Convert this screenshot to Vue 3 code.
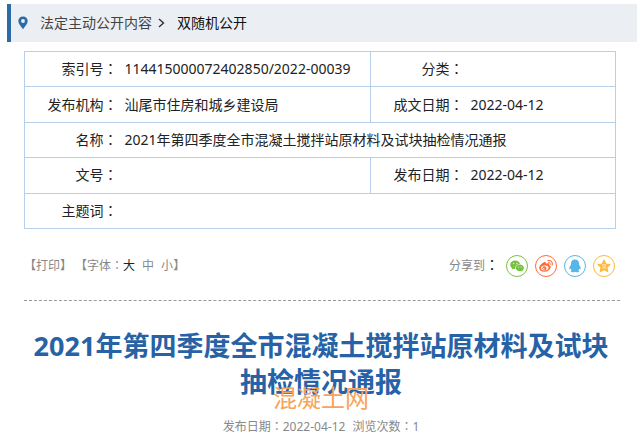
<template>
    <div class="page">
        <nav class="crumbs">
            <svg class="pin" viewBox="0 0 10 14" aria-hidden="true">
                <path fill="#2b6ca8" fill-rule="evenodd" d="M5 0.5C2.3 0.5 0.3 2.5 0.3 5C0.3 8 3.3 10.8 5 13.3C6.7 10.8 9.7 8 9.7 5C9.7 2.5 7.7 0.5 5 0.5ZM5 3.1A1.9 1.9 0 1 1 5 6.9A1.9 1.9 0 1 1 5 3.1Z" />
            </svg>
            <a class="crumb" href="#">法定主动公开内容</a>
            <svg class="arrow" viewBox="0 0 7 10" aria-hidden="true">
                <path d="M1 1L5.5 5L1 9" fill="none" stroke="#333" stroke-width="1.4" />
            </svg>
            <a class="crumb current" href="#">双随机公开</a>
        </nav>

        <table class="info">
            <colgroup>
                <col class="label-col">
                <col>
                <col class="label-col">
                <col class="date-col">
            </colgroup>
            <tbody>
                <tr v-for="(row, index) in rows" :key="index">
                    <template v-for="item in row" :key="item.label">
                        <th scope="row">{{ item.label }}<span class="colon">：</span></th>
                        <td :colspan="row.length === 1 ? 3 : 1">{{ item.value }}</td>
                    </template>
                </tr>
            </tbody>
        </table>

        <div class="tools">
            <div class="tool-group">
                <span>【<button @click="printPage">打印</button>】</span>
                <span class="sizes">【字体<span class="colon">：</span><button v-for="size in sizes" :key="size" :class="{ active: size === selectedSize }" @click="selectedSize = size">{{ size }}</button>】</span>
            </div>
            <div class="share">
                <span>分享到<b class="colon">：</b></span>
                <button class="share-button wechat" aria-label="微信">
                    <svg viewBox="0 0 14 14">
                        <path fill="#7ac143" d="M5.2 1.6C2.3 1.6 0.2 3.4 0.2 5.8C0.2 7.2 0.9 8.4 2.1 9.2L1.6 10.8L3.5 9.8C4.1 10 4.7 10.1 5.4 10C4.7 7.2 7 4.9 10 4.9C9.5 3 7.6 1.6 5.2 1.6Z" />
                        <path fill="#7ac143" d="M9.8 5.5C7.4 5.5 5.8 7 5.8 8.9C5.8 10.8 7.5 12.2 9.8 12.2C10.3 12.2 10.8 12.1 11.3 12L12.8 12.8L12.4 11.4C13.3 10.8 13.9 9.9 13.9 8.9C13.9 7 12.1 5.5 9.8 5.5Z" />
                        <g fill="#fff">
                            <circle cx="3.6" cy="4.6" r="0.6" />
                            <circle cx="6.9" cy="4.6" r="0.6" />
                            <circle cx="8.4" cy="7.9" r="0.5" />
                            <circle cx="11.2" cy="7.9" r="0.5" />
                        </g>
                    </svg>
                </button>
                <button class="share-button weibo" aria-label="微博">
                    <svg viewBox="0 0 14 14">
                        <path fill="#ff6c38" d="M5.7 3C6.8 2.7 7.3 3.5 6.9 4.8C8.8 4 10.5 4.2 10 6.1C11.3 6.5 12 7.4 11.6 8.8C11 11.1 8.4 12.8 5.5 12.8C2.6 12.8 0.2 11.2 0.2 9C0.2 6.8 3.1 3.7 5.7 3Z" />
                        <ellipse cx="5.7" cy="9" rx="3.8" ry="2.5" fill="#fff" transform="rotate(-8 5.7 9)" />
                        <circle cx="5.4" cy="9.2" r="2" fill="#ff6c38" />
                        <circle cx="4.8" cy="9.7" r="0.7" fill="#fff" />
                        <g fill="none" stroke="#ff6c38" stroke-linecap="round">
                            <path stroke-width="1.1" d="M9 1.6C11.7 1 13.9 3.1 13.1 6" />
                            <path stroke-width="0.9" d="M9.4 3.5C10.7 3.2 11.7 4.2 11.3 5.5" />
                        </g>
                    </svg>
                </button>
                <button class="share-button qq" aria-label="QQ">
                    <svg viewBox="0 0 14 14">
                        <path fill="#56b6e7" d="M7 0.6C4.3 0.6 2.9 2.4 3 4.7C3.1 5.5 2.8 5.8 2.6 6.3C1.7 7.7 1.1 9.2 1.4 10.3C1.6 10.8 2.2 10.3 2.7 9.6C2.9 10.4 3.2 10.9 3.7 11.4C2.8 11.8 2.6 12.3 3 12.8C3.6 13.5 6.2 13.4 7 12.7C7.8 13.4 10.4 13.5 11 12.8C11.4 12.3 11.2 11.8 10.3 11.4C10.8 10.9 11.1 10.4 11.3 9.6C11.8 10.3 12.4 10.8 12.6 10.3C12.9 9.2 12.3 7.7 11.4 6.3C11.2 5.8 10.9 5.5 11 4.7C11.1 2.4 9.7 0.6 7 0.6Z" />
                    </svg>
                </button>
                <button class="share-button qzone" aria-label="QQ空间">
                    <svg viewBox="0 0 14 14">
                        <path fill="#fdb93d" stroke="#fdb93d" stroke-width="1.2" stroke-linejoin="round" d="M7 1.2L8.8 5L13 5.5L9.9 8.4L10.7 12.6L7 10.5L3.3 12.6L4.1 8.4L1 5.5L5.2 5Z" />
                        <path fill="none" stroke="#fff" stroke-width="0.7" d="M4.7 5.9H9L5.5 8.9H9.4" />
                    </svg>
                </button>
            </div>
        </div>

        <article>
            <div class="heading">
                <h1>2021年第四季度全市混凝土搅拌站原材料及试块抽检情况通报</h1>
                <span class="watermark">混凝土网</span>
            </div>
            <p class="meta">
                <span>发布日期<span class="colon">：</span>2022-04-12</span>
                <span>浏览次数<span class="colon">：</span>1</span>
            </p>
        </article>
    </div>
</template>

<script setup>
import { ref } from 'vue';

const rows = [
    [
        { label: '索引号', value: '114415000072402850/2022-00039' },
        { label: '分类', value: '' },
    ],
    [
        { label: '发布机构', value: '汕尾市住房和城乡建设局' },
        { label: '成文日期', value: '2022-04-12' },
    ],
    [
        { label: '名称', value: '2021年第四季度全市混凝土搅拌站原材料及试块抽检情况通报' },
    ],
    [
        { label: '文号', value: '' },
        { label: '发布日期', value: '2022-04-12' },
    ],
    [
        { label: '主题词', value: '' },
    ],
];

const sizes = ['大', '中', '小'];
const selectedSize = ref('大');

function printPage() {
    window.print();
}
</script>

<style>
body {
    margin: 0;
    background-color: #fff;
}
</style>

<style scoped>
.page {
    padding: 4px 3px 0 7px;
    font-family: "Noto Sans", "Noto Sans CJK SC", sans-serif;
    font-size: 14px;
    line-height: 20px;
    color: #222;
}

button {
    padding: 0;
    border: none;
    background: none;
    font: inherit;
    color: inherit;
    cursor: pointer;
}

/* the TC face centres the fullwidth colon */
.colon {
    font-family: "Noto Sans CJK TC", sans-serif;
    line-height: 1;
}

.crumbs {
    display: flex;
    align-items: center;
    padding: 9px 12px 9px 7px;
    border-left: 4px solid #2b6ca8;
    background-color: #ebeff3;
}

.pin {
    width: 10px;
    height: 14px;
    margin-right: 12px;
}

.arrow {
    width: 7px;
    height: 10px;
    margin: 0 12px 0 6px;
}

.crumb {
    color: #444;
    text-decoration: none;
}

.crumb.current {
    color: #111;
}

.info {
    width: calc(100% - 38px);
    height: 178px;
    margin: 9px 21px 0 17px;
    border-collapse: collapse;
    table-layout: fixed;
    border: 1px solid #b5d0e8;
}

.label-col {
    width: 93px;
}

.date-col {
    width: 152px;
}

.info th,
.info td {
    padding: 0;
    border-top: 1px solid #b5d0e8;
    font-weight: 400;
}

.info th {
    border-left: 1px solid #b5d0e8;
    text-align: right;
    white-space: nowrap;
}

.info td {
    padding-left: 7px;
    text-align: left;
}

.tools {
    display: flex;
    justify-content: space-between;
    align-items: center;
    margin: 0 17px;
    padding: 26px 5px 23px 0;
    border-bottom: 1px dashed #999;
    font-size: 12px;
    color: #888;
}

.tool-group {
    display: flex;
    gap: 3px;
}

.sizes button + button {
    margin-left: 7px;
}

.sizes .active {
    color: #222;
}

.share {
    display: flex;
    align-items: center;
    gap: 7px;
}

.share b {
    font-size: 14px;
    font-weight: 400;
    color: #222;
}

.share-button {
    display: flex;
    align-items: center;
    justify-content: center;
    width: 22px;
    height: 22px;
    border: 1px solid;
    border-radius: 50%;
}

.share-button svg {
    width: 14px;
    height: 14px;
}

.wechat {
    color: #7ac143;
}

.weibo {
    color: #ff6c38;
}

.qq {
    color: #56b6e7;
}

.qzone {
    color: #fdb93d;
}

.heading {
    position: relative;
    margin: 27px 18px 0 16px;
}

h1 {
    margin: 0;
    font-size: 27px;
    line-height: 36px;
    font-weight: 700;
    text-align: center;
    color: #2862a6;
}

.watermark {
    position: absolute;
    left: 0;
    right: 0;
    bottom: -14px;
    font-size: 24px;
    line-height: 32px;
    text-align: center;
    color: #f7a35c;
}

.meta {
    display: flex;
    justify-content: center;
    gap: 7px;
    margin: 17px 18px 0 16px;
    font-size: 12px;
    color: #888;
}
</style>
